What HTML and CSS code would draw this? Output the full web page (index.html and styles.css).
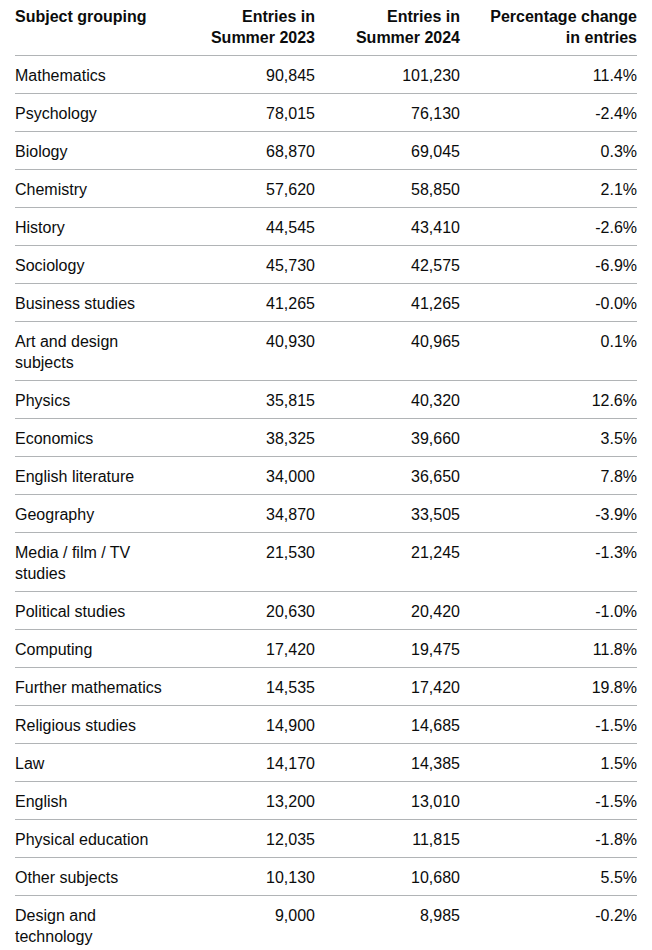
FILE: index.html
```html
<!DOCTYPE html>
<html lang="en">
<head>
<meta charset="utf-8">
<title>Entries by subject</title>
<link rel="stylesheet" href="styles.css">
</head>
<body>
<div class="wrap">
<table class="table">
  <colgroup>
    <col class="c1"><col class="c2"><col class="c3"><col class="c4">
  </colgroup>
  <thead>
    <tr>
      <th class="head">Subject grouping</th>
      <th class="head num">Entries in Summer 2023</th>
      <th class="head num">Entries in Summer 2024</th>
      <th class="head num">Percentage change in entries</th>
    </tr>
  </thead>
  <tbody>
    <tr><td>Mathematics</td><td class="num">90,845</td><td class="num">101,230</td><td class="num">11.4%</td></tr>
    <tr><td>Psychology</td><td class="num">78,015</td><td class="num">76,130</td><td class="num">-2.4%</td></tr>
    <tr><td>Biology</td><td class="num">68,870</td><td class="num">69,045</td><td class="num">0.3%</td></tr>
    <tr><td>Chemistry</td><td class="num">57,620</td><td class="num">58,850</td><td class="num">2.1%</td></tr>
    <tr><td>History</td><td class="num">44,545</td><td class="num">43,410</td><td class="num">-2.6%</td></tr>
    <tr><td>Sociology</td><td class="num">45,730</td><td class="num">42,575</td><td class="num">-6.9%</td></tr>
    <tr><td>Business studies</td><td class="num">41,265</td><td class="num">41,265</td><td class="num">-0.0%</td></tr>
    <tr><td>Art and design subjects</td><td class="num">40,930</td><td class="num">40,965</td><td class="num">0.1%</td></tr>
    <tr><td>Physics</td><td class="num">35,815</td><td class="num">40,320</td><td class="num">12.6%</td></tr>
    <tr><td>Economics</td><td class="num">38,325</td><td class="num">39,660</td><td class="num">3.5%</td></tr>
    <tr><td>English literature</td><td class="num">34,000</td><td class="num">36,650</td><td class="num">7.8%</td></tr>
    <tr><td>Geography</td><td class="num">34,870</td><td class="num">33,505</td><td class="num">-3.9%</td></tr>
    <tr><td>Media / film / TV studies</td><td class="num">21,530</td><td class="num">21,245</td><td class="num">-1.3%</td></tr>
    <tr><td>Political studies</td><td class="num">20,630</td><td class="num">20,420</td><td class="num">-1.0%</td></tr>
    <tr><td>Computing</td><td class="num">17,420</td><td class="num">19,475</td><td class="num">11.8%</td></tr>
    <tr><td>Further mathematics</td><td class="num">14,535</td><td class="num">17,420</td><td class="num">19.8%</td></tr>
    <tr><td>Religious studies</td><td class="num">14,900</td><td class="num">14,685</td><td class="num">-1.5%</td></tr>
    <tr><td>Law</td><td class="num">14,170</td><td class="num">14,385</td><td class="num">1.5%</td></tr>
    <tr><td>English</td><td class="num">13,200</td><td class="num">13,010</td><td class="num">-1.5%</td></tr>
    <tr><td>Physical education</td><td class="num">12,035</td><td class="num">11,815</td><td class="num">-1.8%</td></tr>
    <tr><td>Other subjects</td><td class="num">10,130</td><td class="num">10,680</td><td class="num">5.5%</td></tr>
    <tr><td>Design and technology</td><td class="num">9,000</td><td class="num">8,985</td><td class="num">-0.2%</td></tr>
  </tbody>
</table>
</div>
</body>
</html>
```
FILE: styles.css
```css
html, body {
  margin: 0;
  padding: 0;
  background: #ffffff;
}
.wrap {
  padding: 0 15px;
}
.table {
  width: 622px;
  table-layout: fixed;
  border-collapse: collapse;
  border-spacing: 0;
  font-family: "Liberation Sans", Arial, sans-serif;
  font-size: 16px;
  line-height: 21px;
  color: #0b0c0c;
}
.c1 { width: 175px; }
.c2 { width: 145px; }
.c3 { width: 145px; }
.c4 { width: 157px; }
.table th,
.table td {
  padding: 9px 20px 7px 0;
  border-bottom: 1px solid #b1b4b6;
  text-align: left;
  vertical-align: top;
}
.table th:last-child,
.table td:last-child {
  padding-right: 0;
}
.table .head {
  font-weight: 700;
  padding-top: 6px;
  padding-bottom: 7px;
}
.table .num {
  text-align: right;
}
.table tbody tr:last-child td {
  border-bottom: none;
}
```
